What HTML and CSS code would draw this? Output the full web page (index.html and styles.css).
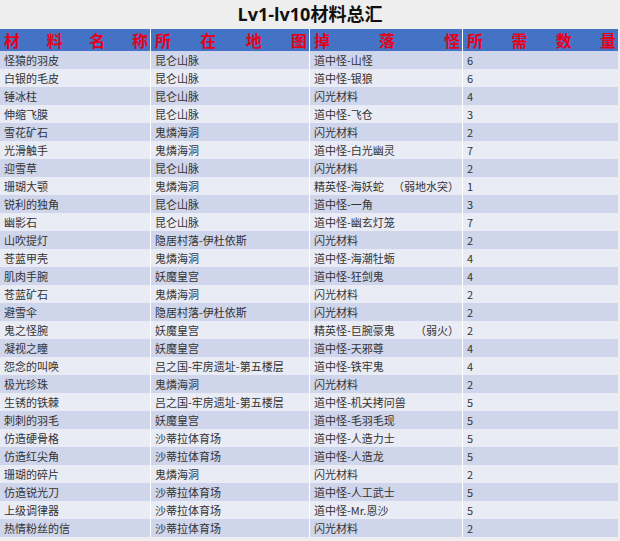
FILE: index.html
```html
<!DOCTYPE html>
<html lang="zh">
<head>
<meta charset="utf-8">
<title>Lv1-lv10材料总汇</title>
<link rel="stylesheet" href="styles.css">
</head>
<body>
<div class="sheet">
  <div class="title">Lv1-lv10材料总汇</div>
  <div class="table">
    <div class="row head">
      <div class="cell"><span>材</span><span>料</span><span>名</span><span>称</span></div>
      <div class="cell"><span>所</span><span>在</span><span>地</span><span>图</span></div>
      <div class="cell"><span>掉</span><span>落</span><span>怪</span></div>
      <div class="cell"><span>所</span><span>需</span><span>数</span><span>量</span></div>
    </div>
    <div class="row"><div class="cell">怪猿的羽皮</div><div class="cell">昆仑山脉</div><div class="cell">道中怪-山怪</div><div class="cell">6</div></div>
    <div class="row"><div class="cell">白银的毛皮</div><div class="cell">昆仑山脉</div><div class="cell">道中怪-银狼</div><div class="cell">6</div></div>
    <div class="row"><div class="cell">锤冰柱</div><div class="cell">昆仑山脉</div><div class="cell">闪光材料</div><div class="cell">4</div></div>
    <div class="row"><div class="cell">伸缩飞膜</div><div class="cell">昆仑山脉</div><div class="cell">道中怪-飞仓</div><div class="cell">3</div></div>
    <div class="row"><div class="cell">雪花矿石</div><div class="cell">鬼燐海洞</div><div class="cell">闪光材料</div><div class="cell">2</div></div>
    <div class="row"><div class="cell">光滑触手</div><div class="cell">鬼燐海洞</div><div class="cell">道中怪-白光幽灵</div><div class="cell">7</div></div>
    <div class="row"><div class="cell">迎雪草</div><div class="cell">昆仑山脉</div><div class="cell">闪光材料</div><div class="cell">2</div></div>
    <div class="row"><div class="cell">珊瑚大颚</div><div class="cell">鬼燐海洞</div><div class="cell split"><span>精英怪-海妖蛇</span><span>（弱地水突）</span></div><div class="cell">1</div></div>
    <div class="row"><div class="cell">锐利的独角</div><div class="cell">昆仑山脉</div><div class="cell">道中怪-一角</div><div class="cell">3</div></div>
    <div class="row"><div class="cell">幽影石</div><div class="cell">昆仑山脉</div><div class="cell">道中怪-幽玄灯笼</div><div class="cell">7</div></div>
    <div class="row"><div class="cell">山吹提灯</div><div class="cell">隐居村落-伊杜依斯</div><div class="cell">闪光材料</div><div class="cell">2</div></div>
    <div class="row"><div class="cell">苍蓝甲壳</div><div class="cell">鬼燐海洞</div><div class="cell">道中怪-海潮牡蛎</div><div class="cell">4</div></div>
    <div class="row"><div class="cell">肌肉手腕</div><div class="cell">妖魔皇宫</div><div class="cell">道中怪-狂剑鬼</div><div class="cell">4</div></div>
    <div class="row"><div class="cell">苍蓝矿石</div><div class="cell">鬼燐海洞</div><div class="cell">闪光材料</div><div class="cell">2</div></div>
    <div class="row"><div class="cell">避雪伞</div><div class="cell">隐居村落-伊杜依斯</div><div class="cell">闪光材料</div><div class="cell">2</div></div>
    <div class="row"><div class="cell">鬼之怪腕</div><div class="cell">妖魔皇宫</div><div class="cell split"><span>精英怪-巨腕豪鬼</span><span>（弱火）</span></div><div class="cell">2</div></div>
    <div class="row"><div class="cell">凝视之瞳</div><div class="cell">妖魔皇宫</div><div class="cell">道中怪-天邪尊</div><div class="cell">4</div></div>
    <div class="row"><div class="cell">怨念的叫唤</div><div class="cell">吕之国-牢房遗址-第五楼层</div><div class="cell">道中怪-铁牢鬼</div><div class="cell">4</div></div>
    <div class="row"><div class="cell">极光珍珠</div><div class="cell">鬼燐海洞</div><div class="cell">闪光材料</div><div class="cell">2</div></div>
    <div class="row"><div class="cell">生锈的铁棘</div><div class="cell">吕之国-牢房遗址-第五楼层</div><div class="cell">道中怪-机关拷问兽</div><div class="cell">5</div></div>
    <div class="row"><div class="cell">刺刺的羽毛</div><div class="cell">妖魔皇宫</div><div class="cell">道中怪-毛羽毛现</div><div class="cell">5</div></div>
    <div class="row"><div class="cell">仿造硬骨格</div><div class="cell">沙蒂拉体育场</div><div class="cell">道中怪-人造力士</div><div class="cell">5</div></div>
    <div class="row"><div class="cell">仿造红尖角</div><div class="cell">沙蒂拉体育场</div><div class="cell">道中怪-人造龙</div><div class="cell">5</div></div>
    <div class="row"><div class="cell">珊瑚的碎片</div><div class="cell">鬼燐海洞</div><div class="cell">闪光材料</div><div class="cell">2</div></div>
    <div class="row"><div class="cell">仿造锐光刀</div><div class="cell">沙蒂拉体育场</div><div class="cell">道中怪-人工武士</div><div class="cell">5</div></div>
    <div class="row"><div class="cell">上级调律器</div><div class="cell">沙蒂拉体育场</div><div class="cell">道中怪-Mr.恩沙</div><div class="cell">5</div></div>
    <div class="row"><div class="cell">热情粉丝的信</div><div class="cell">沙蒂拉体育场</div><div class="cell">闪光材料</div><div class="cell">2</div></div>
  </div>
</div>
</body>
</html>
```
FILE: styles.css
```css
html, body {
  margin: 0;
  padding: 0;
  background: #eeeeee;
}
.sheet {
  width: 620px;
  height: 541px;
  overflow: hidden;
  background: #eeeeee;
  font-family: "Noto Sans CJK SC", "Noto Sans", sans-serif;
}
.title {
  height: 29px;
  line-height: 29px;
  text-align: center;
  font-family: "Open Sans", "Noto Sans CJK SC", sans-serif;
  font-weight: bold;
  font-size: 18px;
  color: #111;
}
.table {
  width: 618px;
}
.row {
  display: grid;
  grid-template-columns: 150px 159px 153px 156px;
  height: 18px;
  background: #cfd5ea;
}
.row:nth-child(odd) {
  background: #e9ebf5;
}
.row.head {
  height: 22px;
  background: #4472c4;
}
.cell {
  box-sizing: border-box;
  padding: 0 3px 0 4px;
  font-size: 11px;
  line-height: 18px;
  color: #333333;
  white-space: nowrap;
  overflow: hidden;
}
.cell + .cell {
  border-left: 1px solid #ffffff;
}
.head .cell {
  display: flex;
  justify-content: space-between;
  align-items: center;
  padding: 0 2px 0 4px;
  font-size: 16px;
  font-weight: bold;
  line-height: 22px;
  color: #e8001a;
}
.split {
  display: flex;
  justify-content: space-between;
}
```
